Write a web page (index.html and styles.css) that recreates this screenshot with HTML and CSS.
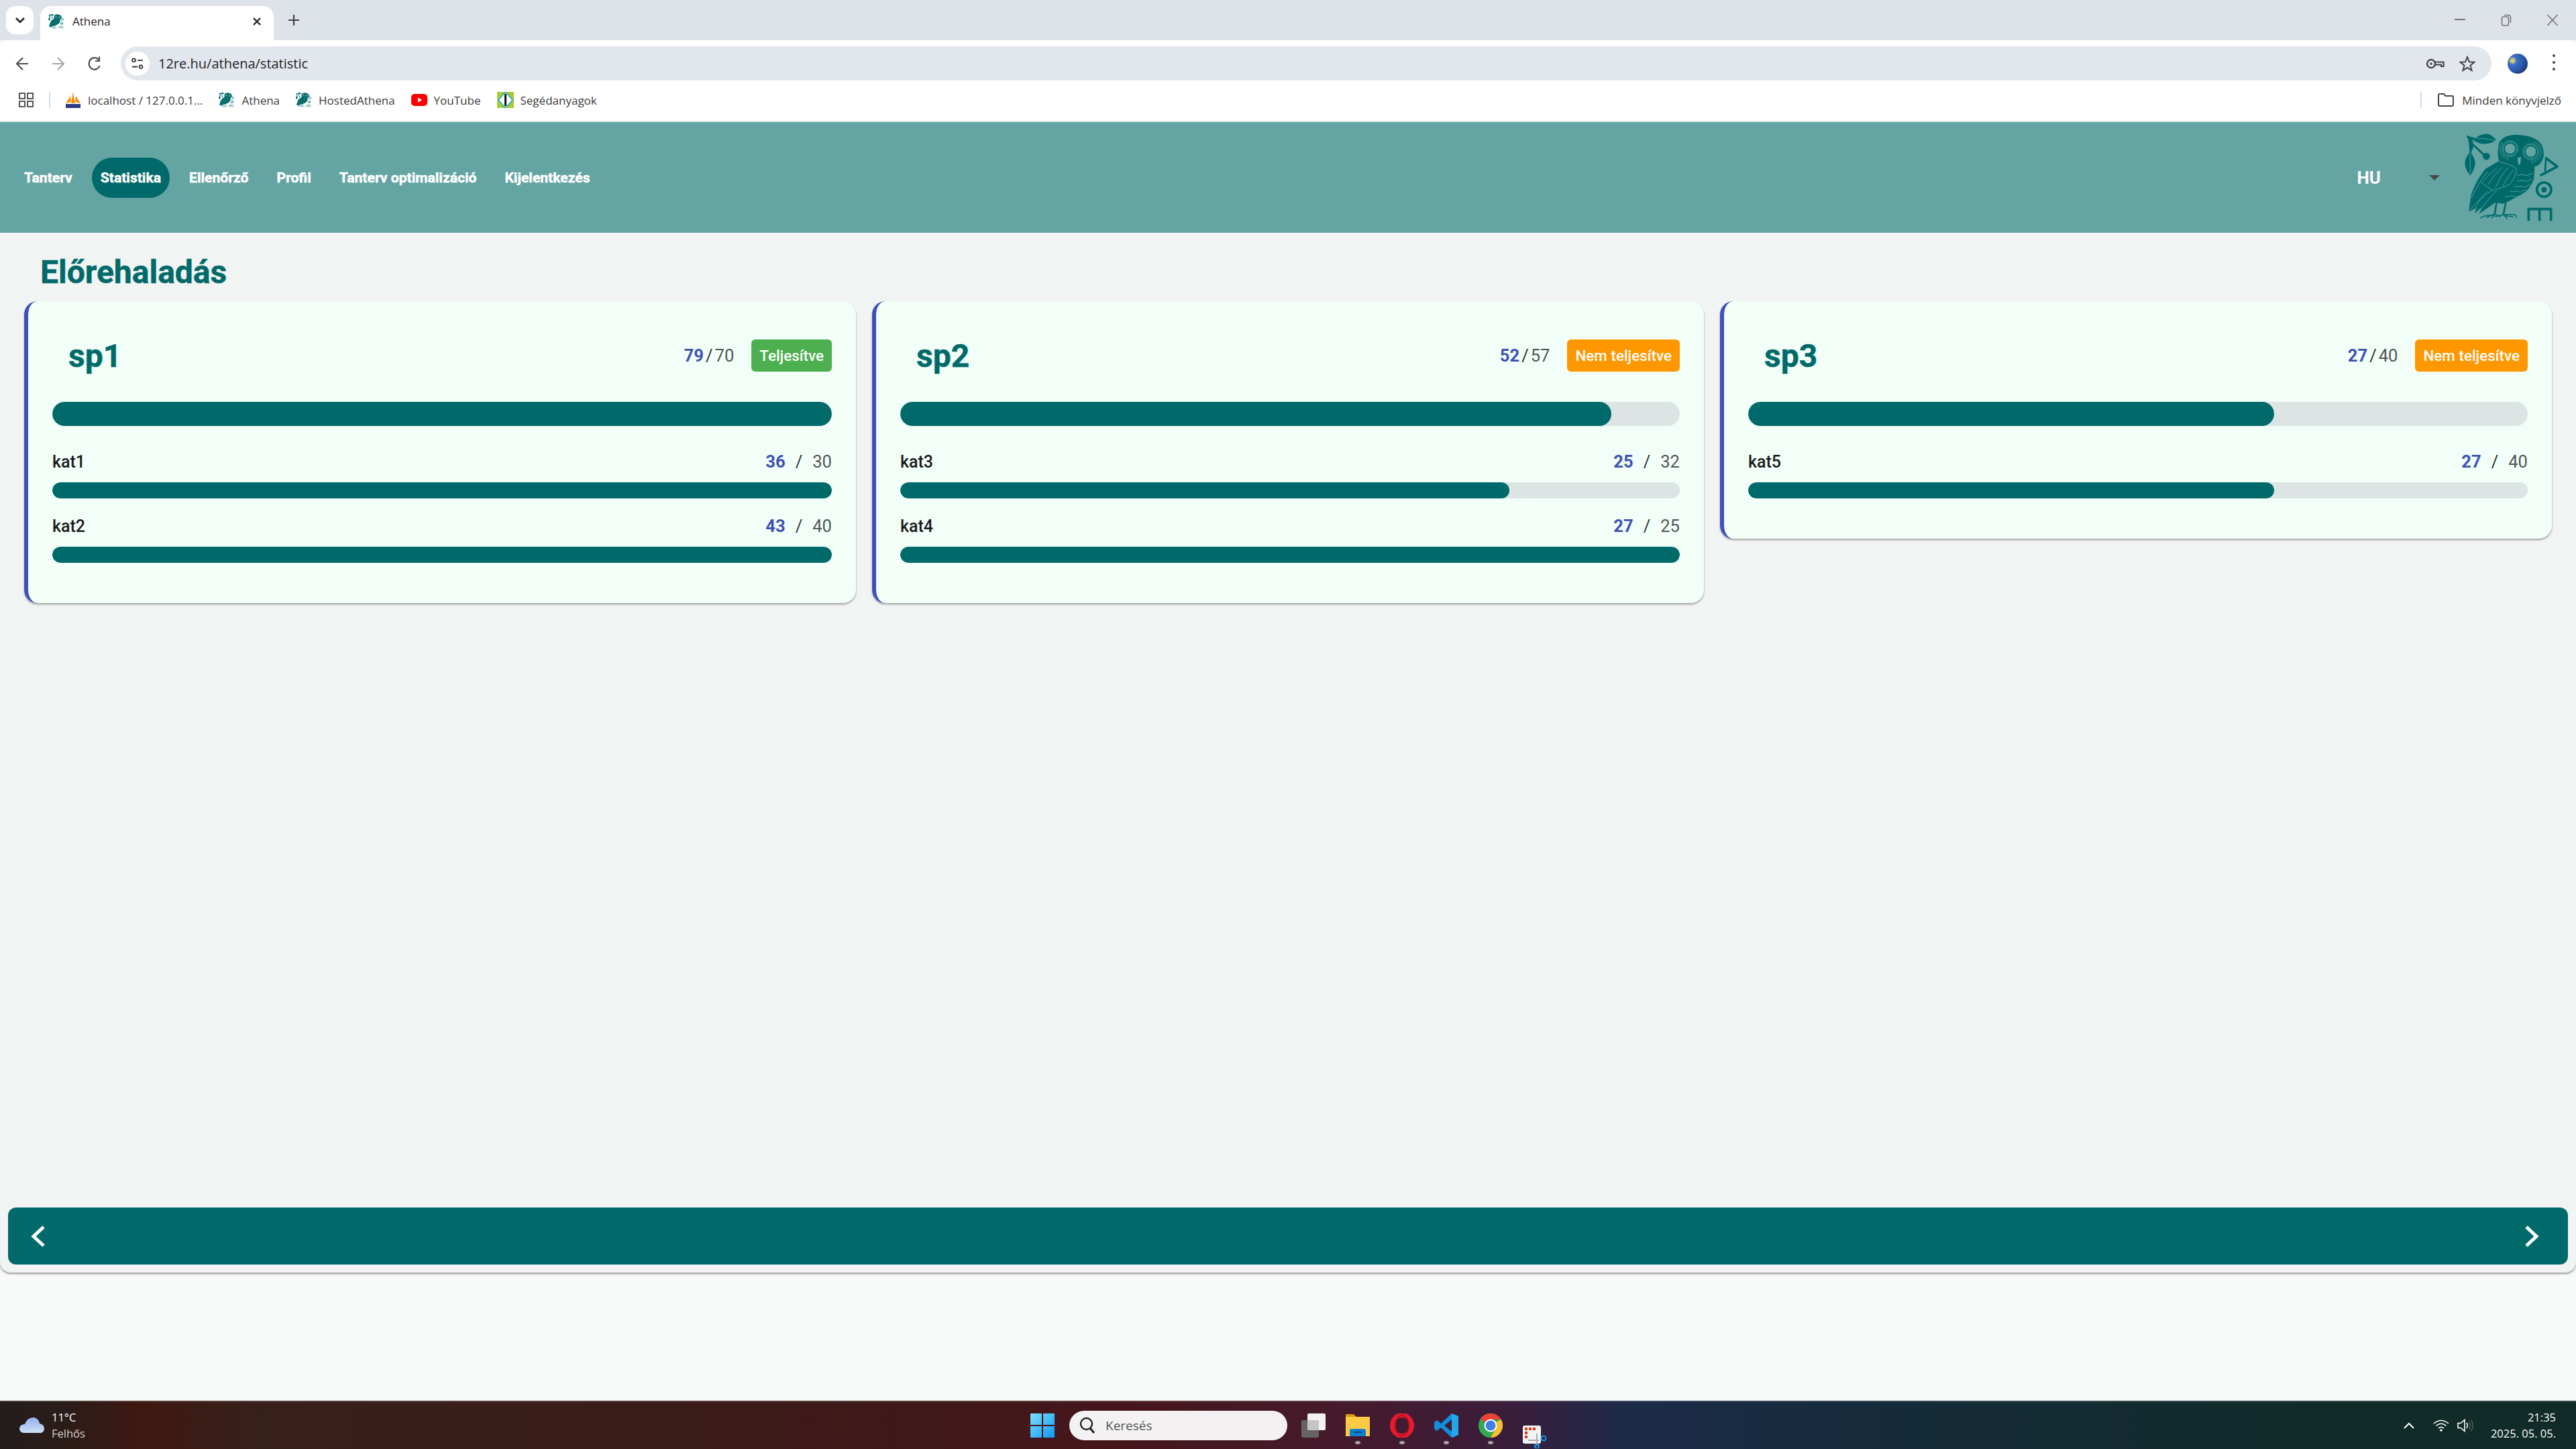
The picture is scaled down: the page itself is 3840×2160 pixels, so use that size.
FILE: index.html
```html
<!DOCTYPE html>
<html lang="hu">
<head>
<meta charset="utf-8">
<title>Athena</title>
<link rel="stylesheet" href="styles.css">
</head>
<body>
<svg class="defs" width="0" height="0" aria-hidden="true">
  <symbol id="owl" viewBox="0 0 600 480">
    <g fill="#006a6a">
      <path d="M108 50 L150 62 Q178 42 205 44 Q230 50 243 73 Q210 92 180 88 Q155 84 136 68 Q139 78 141 88 L192 134 L185 141 L142 100 L131 130 Q150 155 149 178 Q145 210 127 229 Q104 205 103 175 Q104 150 124 128 Q122 90 118 70 Z"/>
      <circle cx="199" cy="144" r="16"/>
      <path d="M252 105 Q252 70 290 55 Q320 42 360 50 Q420 55 445 90 Q458 115 455 145 Q445 185 415 190 L412 245 Q395 295 355 315 L300 345 L270 356 L240 350 L166 402 L178 372 L147 400 L154 375 L120 392 L130 320 Q150 255 195 200 L255 165 Q248 135 252 105 Z"/>
    </g>
    <g fill="none" stroke="#006a6a" stroke-linecap="round">
      <path stroke-width="8" d="M246 345 L236 402 M286 350 L276 402"/>
      <path stroke-width="4.500" d="M174 419 Q195 405 234 408 M200 417 L236 402 L262 414 M236 408 L222 420 M240 413 Q280 400 330 406 L334 418 M276 402 L292 424 M285 410 L318 414"/>
    </g>
    <g fill="#64a5a4">
      <circle cx="305" cy="110" r="23"/>
      <circle cx="398" cy="123" r="23"/>
      <path d="M339 151 L354 146 L352 172 L346 185 L340 170 Z"/>
    </g>
    <g fill="none" stroke="#64a5a4" stroke-width="2.500">
      <circle cx="305" cy="110" r="31"/>
      <circle cx="398" cy="123" r="31"/>
      <circle cx="305" cy="110" r="36" stroke-width="2"/>
      <circle cx="398" cy="123" r="36" stroke-width="2"/>
      <path d="M150 63 Q195 62 240 74 M127 135 L127 222"/>
      <path d="M254 168 Q300 178 332 196 Q338 228 305 268 Q262 290 226 296 M226 296 Q170 330 122 388"/>
      <path d="M246 196 Q210 225 178 262 L226 296 M270 192 Q236 222 206 270 M296 196 Q268 222 240 285 M320 205 Q298 232 272 278 M205 212 Q165 262 132 330"/>
      <path d="M205 300 Q160 335 146 396 M245 298 Q195 345 166 398"/>
      <path d="M336 226 q10 5 18 1 t18 1 t18 -2 t18 -3 M336 252 q10 5 18 1 t18 1 t18 -2 t16 -5 M324 278 q10 5 18 1 t18 1 t18 -2 t18 -5 M306 300 q10 5 18 1 t18 1 t18 -2 t16 -4 M282 322 q10 5 18 1 t18 0 t18 -3"/>
    </g>
    <g fill="none" stroke="#64a5a4" stroke-width="10" stroke-dasharray="2.500 7">
      <path d="M297 154 A45 45 0 0 1 268 84"/>
      <path d="M412 80 A45 45 0 0 1 400 168"/>
    </g>
    <g fill="none" stroke="#006a6a" stroke-width="11" stroke-linecap="round" stroke-linejoin="round">
      <path d="M466 152 L516 190 L444 228"/>
      <path d="M466 152 L462 208" stroke-width="8"/>
      <circle cx="457" cy="293" r="32"/>
      <path d="M388 428 L388 380 L488 380 L488 428 M437 380 L437 428"/>
    </g>
    <circle cx="457" cy="293" r="12" fill="#006a6a"/>
  </symbol>
</svg>

<header class="tabstrip">
  <div class="tab-list-btn">
    <svg width="16" height="10" viewBox="0 0 16 10"><path d="M2 2 L8 8 L14 2" fill="none" stroke="#222" stroke-width="2.6"/></svg>
  </div>
  <div class="tab">
    <svg class="favicon" width="24" height="24" viewBox="100 40 430 400"><use href="#owl" width="600" height="480"/></svg>
    <span class="tab-title">Athena</span>
    <svg class="tab-close" width="14" height="14" viewBox="0 0 14 14"><path d="M2 2 L12 12 M12 2 L2 12" stroke="#222" stroke-width="2.4"/></svg>
  </div>
  <svg class="tab-new" width="18" height="18" viewBox="0 0 18 18"><path d="M9 1 V17 M1 9 H17" stroke="#444" stroke-width="2.2"/></svg>
  <div class="win-controls">
    <svg width="16" height="16" viewBox="0 0 16 16"><path d="M0 8 H16" stroke="#777" stroke-width="2"/></svg>
    <svg width="16" height="18" viewBox="0 0 16 18"><rect x="1.5" y="4" width="10" height="13" rx="2.5" fill="none" stroke="#777" stroke-width="1.6"/><path d="M5 1.5 H11 Q14.500 1.500 14.500 5 V13" fill="none" stroke="#777" stroke-width="1.6"/></svg>
    <svg width="16" height="18" viewBox="0 0 16 18"><path d="M0.500 1 L15.500 17 M15.500 1 L0.500 17" stroke="#777" stroke-width="1.6"/></svg>
  </div>
</header>

<nav class="toolbar">
  <div class="toolbar-nav">
    <svg width="20" height="24" viewBox="0 0 20 24"><path d="M19 12 H3 M11 3 L2 12 L11 21" fill="none" stroke="#4a4d51" stroke-width="2.2"/></svg>
    <svg width="20" height="24" viewBox="0 0 20 24"><path d="M1 12 H17 M9 3 L18 12 L9 21" fill="none" stroke="#a4a7ab" stroke-width="2.2"/></svg>
    <svg width="20" height="24" viewBox="0 0 20 24"><path d="M17.500 15 A8.200 8.800 0 1 1 16 6 M17 1.500 V8 H11" fill="none" stroke="#4a4d51" stroke-width="2.2"/></svg>
  </div>
  <div class="omnibox">
    <div class="site-info">
      <svg width="18" height="18" viewBox="0 0 18 18"><circle cx="3.500" cy="3.800" r="2.400" fill="none" stroke="#333" stroke-width="1.800"/><path d="M9 3.800 H17 M1 13.500 H9" stroke="#333" stroke-width="1.800"/><circle cx="14" cy="13.500" r="2.400" fill="none" stroke="#333" stroke-width="1.800"/></svg>
    </div>
    <span class="url">12re.hu/athena/statistic</span>
    <svg class="key" width="28" height="18" viewBox="0 0 28 18"><circle cx="8" cy="9" r="6" fill="none" stroke="#444" stroke-width="2.400"/><circle cx="8" cy="9" r="1.800" fill="#444"/><path d="M14 6.500 H26.500 V13 H23 V10.500 H14" fill="none" stroke="#444" stroke-width="2.200"/></svg>
    <svg class="star" width="24" height="24" viewBox="0 0 24 24"><path d="M12 2 L14.800 9.200 L22.500 9.600 L16.500 14.500 L18.500 22 L12 17.800 L5.500 22 L7.500 14.500 L1.500 9.600 L9.200 9.200 Z" fill="none" stroke="#444" stroke-width="2"/></svg>
  </div>
  <div class="avatar"></div>
  <div class="menu-dots"><i></i><i></i><i></i></div>
</nav>

<div class="bookmarks">
  <svg class="bm-apps" width="22" height="22" viewBox="0 0 22 22"><g fill="none" stroke="#555" stroke-width="2"><rect x="1" y="1" width="8" height="8"/><rect x="13" y="1" width="8" height="8"/><rect x="1" y="13" width="8" height="8"/><rect x="13" y="13" width="8" height="8"/></g></svg>
  <span class="bm-sep"></span>
  <div class="bm bm-first">
    <svg width="24" height="24" viewBox="0 0 24 24"><path d="M1 17 L8 6 L9 15 Z M9 17 L12 0 L15 17 Z M15 15 L16 6 L23 17 Z" fill="#f29111"/><rect x="1" y="18" width="22" height="6" fill="#2b3a86"/></svg>
    <span>localhost / 127.0.0.1...</span>
  </div>
  <div class="bm"><svg width="24" height="24" viewBox="100 40 430 400"><use href="#owl" width="600" height="480"/></svg><span>Athena</span></div>
  <div class="bm"><svg width="24" height="24" viewBox="100 40 430 400"><use href="#owl" width="600" height="480"/></svg><span>HostedAthena</span></div>
  <div class="bm">
    <svg width="24" height="24" viewBox="0 0 24 24"><rect x="0" y="3" width="24" height="18" rx="5" fill="#f00"/><path d="M10 8.500 L16 12 L10 15.500 Z" fill="#fff"/></svg>
    <span>YouTube</span>
  </div>
  <div class="bm">
    <svg width="25" height="24" viewBox="0 0 25 24"><rect width="25" height="24" fill="#a9cb2f"/><path d="M12.500 0 L23 12 L12.500 24 L2 12 Z" fill="#fff" stroke="#18a9d8" stroke-width="1.500"/><path d="M12.500 3 V21" stroke="#111" stroke-width="3"/></svg>
    <span>Segédanyagok</span>
  </div>
  <span class="bm-sep bm-sep-end"></span>
  <div class="bm bm-all">
    <svg width="24" height="20" viewBox="0 0 24 20"><path d="M1 3 Q1 1 3 1 H9 L11.500 4 H21 Q23 4 23 6 V17 Q23 19 21 19 H3 Q1 19 1 17 Z" fill="none" stroke="#444" stroke-width="2"/></svg>
    <span>Minden könyvjelző</span>
  </div>
</div>

<main class="shell">
  <header class="app-header">
    <ul class="app-nav">
      <li class="nav-item">Tanterv</li>
      <li class="nav-item nav-active">Statistika</li>
      <li class="nav-item">Ellenőrző</li>
      <li class="nav-item">Profil</li>
      <li class="nav-item">Tanterv optimalizáció</li>
      <li class="nav-item">Kijelentkezés</li>
    </ul>
    <div class="lang"><span>HU</span><i class="caret"></i></div>
    <svg class="logo" width="200" height="160"><use href="#owl"/></svg>
  </header>

  <section class="content">
    <h1 class="page-title">Előrehaladás</h1>
    <div class="cards">
      <article class="card">
        <div class="card-head">
          <h2 class="card-title">sp1</h2>
          <div class="card-score"><b>79</b><span class="slash">/</span><span class="max">70</span></div>
          <span class="badge badge-ok">Teljesítve</span>
        </div>
        <div class="bar bar-big"><div class="fill" style="width:100%"></div></div>
        <div class="cat">
          <div class="cat-row"><span class="cat-name">kat1</span><div class="cat-score"><b>36</b><span class="slash">/</span><span class="max">30</span></div></div>
          <div class="bar"><div class="fill" style="width:100%"></div></div>
        </div>
        <div class="cat">
          <div class="cat-row"><span class="cat-name">kat2</span><div class="cat-score"><b>43</b><span class="slash">/</span><span class="max">40</span></div></div>
          <div class="bar"><div class="fill" style="width:100%"></div></div>
        </div>
      </article>

      <article class="card">
        <div class="card-head">
          <h2 class="card-title">sp2</h2>
          <div class="card-score"><b>52</b><span class="slash">/</span><span class="max">57</span></div>
          <span class="badge badge-no">Nem teljesítve</span>
        </div>
        <div class="bar bar-big"><div class="fill" style="width:91.2%"></div></div>
        <div class="cat">
          <div class="cat-row"><span class="cat-name">kat3</span><div class="cat-score"><b>25</b><span class="slash">/</span><span class="max">32</span></div></div>
          <div class="bar"><div class="fill" style="width:78.1%"></div></div>
        </div>
        <div class="cat">
          <div class="cat-row"><span class="cat-name">kat4</span><div class="cat-score"><b>27</b><span class="slash">/</span><span class="max">25</span></div></div>
          <div class="bar"><div class="fill" style="width:100%"></div></div>
        </div>
      </article>

      <article class="card">
        <div class="card-head">
          <h2 class="card-title">sp3</h2>
          <div class="card-score"><b>27</b><span class="slash">/</span><span class="max">40</span></div>
          <span class="badge badge-no">Nem teljesítve</span>
        </div>
        <div class="bar bar-big"><div class="fill" style="width:67.5%"></div></div>
        <div class="cat">
          <div class="cat-row"><span class="cat-name">kat5</span><div class="cat-score"><b>27</b><span class="slash">/</span><span class="max">40</span></div></div>
          <div class="bar"><div class="fill" style="width:67.5%"></div></div>
        </div>
      </article>
    </div>
  </section>

  <div class="pager">
    <svg width="22" height="34" viewBox="0 0 22 34"><path d="M19 3 L4 17 L19 31" fill="none" stroke="#fff" stroke-width="5"/></svg>
    <svg width="22" height="34" viewBox="0 0 22 34"><path d="M3 3 L18 17 L3 31" fill="none" stroke="#fff" stroke-width="5"/></svg>
  </div>
</main>

<footer class="taskbar">
  <div class="weather">
    <svg width="38" height="26" viewBox="0 0 38 26"><defs><linearGradient id="cl" x1="0" y1="0" x2="0" y2="1"><stop offset="0" stop-color="#8fb0ea"/><stop offset="1" stop-color="#cfe0f7"/></linearGradient></defs><path d="M7 24 Q0 24 0 17 Q1 11 8 11 Q12 0 22 1 Q29 3 30 10 Q37 11 37 18 Q36 24 31 24 Z" fill="url(#cl)"/></svg>
    <div class="weather-text"><span>11°C</span><span class="weather-sub">Felhős</span></div>
  </div>
  <div class="task-center">
    <svg class="ti-win" width="36" height="36" viewBox="0 0 36 36"><defs><linearGradient id="wn" x1="0" y1="0" x2="1" y2="1"><stop offset="0" stop-color="#7ae3fb"/><stop offset="1" stop-color="#0f96f5"/></linearGradient></defs><path d="M1 0 H17 V17 H0 V1 Q0 0 1 0 Z M19 0 H35 Q36 0 36 1 V17 H19 Z M0 19 H17 V36 H1 Q0 36 0 35 Z M19 19 H36 V35 Q36 36 35 36 H19 Z" fill="url(#wn)"/></svg>
    <div class="search">
      <svg width="24" height="26" viewBox="0 0 24 26"><circle cx="10.500" cy="10.500" r="8.500" fill="none" stroke="#222" stroke-width="2.400"/><path d="M16 17 L22 24" stroke="#222" stroke-width="3"/></svg>
      <span>Keresés</span>
    </div>
    <div class="task-icons">
      <div class="ti">
        <svg width="36" height="36" viewBox="0 0 36 36"><rect x="9" y="0" width="27" height="25" rx="2" fill="#f2f2f2"/><rect x="0" y="10" width="26" height="26" rx="2" fill="#6a6a6a" opacity=".9"/><rect x="9" y="10" width="17" height="15" fill="#c4c4c4"/></svg>
      </div>
      <div class="ti ti-open">
        <svg width="36" height="36" viewBox="0 0 36 36"><path d="M0 1 H12 L16 5 H36 V34 H0 Z" fill="#d59a0e"/><rect x="0" y="5" width="36" height="29" rx="1" fill="#fdca46"/><path d="M6 34 V26 Q6 23 9 23 H27 Q30 23 30 26 V34 Z" fill="#0d7fd1"/><rect x="12" y="27" width="12" height="2" fill="#084a80"/></svg>
      </div>
      <div class="ti ti-open">
        <svg width="36" height="36" viewBox="0 0 36 36"><ellipse cx="18" cy="18" rx="14.500" ry="15.500" fill="none" stroke="#e81a2d" stroke-width="7"/><ellipse cx="18" cy="18" rx="10" ry="15" fill="none" stroke="#a90f20" stroke-width="1.500"/></svg>
      </div>
      <div class="ti ti-open">
        <svg width="36" height="36" viewBox="0 0 36 36"><path d="M26 0 L36 4 V32 L26 36 L10 21 L4 26 L0 23 V13 L4 10 L10 15 Z M26 9 L15 18 L26 27 Z" fill="#0f8fdc"/><path d="M26 0 L36 4 V32 L26 36 Z" fill="#24a6ee"/></svg>
      </div>
      <div class="ti ti-open">
        <svg width="36" height="36" viewBox="0 0 36 36"><circle cx="18" cy="18" r="18" fill="#34a853"/><path d="M18 0 A18 18 0 0 1 33.600 9 L18 9 A9 9 0 0 0 10 13.500 L3 8 A18 18 0 0 1 18 0 Z" fill="#ea4335"/><path d="M33.600 9 A18 18 0 0 1 18 36 L26 22 A9 9 0 0 0 26 13 Z" fill="#fbc02d"/><circle cx="18" cy="18" r="9.500" fill="#fff"/><circle cx="18" cy="18" r="7.500" fill="#3f80ea"/></svg>
      </div>
      <div class="ti ti-snip">
        <svg width="36" height="34" viewBox="0 0 36 34"><rect x="0" y="0" width="27" height="27" rx="3" fill="#f3f3f3"/><path d="M3 3 H7 V7 H3 Z M9 3 H13 V7 H9 Z M15 3 H19 V7 H15 Z M3 9 H7 V13 H3 Z M3 15 H7 V19 H3 Z" fill="#d63b1f"/><path d="M8 22 H24 M21 12 V30" stroke="#aaa" stroke-width="2"/><circle cx="31" cy="19" r="3.500" fill="none" stroke="#1493e0" stroke-width="2.200"/><circle cx="21" cy="31" r="3" fill="none" stroke="#1493e0" stroke-width="2.200"/></svg>
      </div>
    </div>
  </div>
  <div class="tray">
    <svg width="16" height="10" viewBox="0 0 16 10"><path d="M1 9 L8 2 L15 9" fill="none" stroke="#fff" stroke-width="2"/></svg>
    <svg class="tray-wifi" width="24" height="18" viewBox="0 0 24 18"><g fill="none" stroke="#fff" stroke-width="1.600"><path d="M1 6 Q12 -3 23 6"/><path d="M4.500 9.500 Q12 3 19.500 9.500"/><path d="M8 13 Q12 9.500 16 13"/></g><circle cx="12" cy="16" r="1.800" fill="#fff"/></svg>
    <svg width="24" height="20" viewBox="0 0 24 20"><path d="M1 6.500 H5 L11 1.500 V18.500 L5 13.500 H1 Z" fill="none" stroke="#fff" stroke-width="1.600"/><path d="M14 6 Q16.500 10 14 14" fill="none" stroke="#fff" stroke-width="1.500"/><path d="M17.500 3.500 Q21 10 17.500 16.500 M21 1.500 Q25 10 21 18.500" fill="none" stroke="#5a6664" stroke-width="1.300"/></svg>
    <div class="clock"><span>21:35</span><span>2025. 05. 05.</span></div>
  </div>
</footer>
</body>
</html>
```

FILE: styles.css
```css
* { box-sizing: border-box; }
html, body { margin: 0; padding: 0; }
body {
  width: 3840px;
  height: 2160px;
  overflow: hidden;
  display: flex;
  flex-direction: column;
  background: #f8faf9;
  font-family: Roboto, "Liberation Sans", sans-serif;
}
.defs { position: absolute; }

/* browser chrome */
.tabstrip {
  flex: none;
  height: 60px;
  background: #dee3ea;
  display: flex;
  align-items: flex-start;
  padding: 9px 27px 0 9px;
}
.tab-list-btn {
  width: 41px;
  height: 42px;
  background: #fff;
  border-radius: 14px;
  display: flex;
  align-items: center;
  justify-content: center;
}
.tab {
  width: 348px;
  height: 51px;
  margin-left: 10px;
  background: #fff;
  border-radius: 16px 16px 0 0;
  display: flex;
  align-items: center;
  padding: 0 18px 6px 12px;
}
.favicon { flex: none; }
.tab-title {
  margin-left: 12px;
  font: 400 17px "Open Sans", sans-serif;
  color: #222;
}
.tab-close { margin-left: auto; }
.tab-new { margin: 12px 0 0 21px; }
.win-controls {
  margin-left: auto;
  display: flex;
  gap: 53px;
  padding-top: 12px;
}
.toolbar {
  flex: none;
  height: 60px;
  background: #fff;
  border-radius: 14px 14px 0 0;
  display: flex;
  align-items: flex-end;
  padding-left: 23px;
  padding-right: 31px;
  margin-top: 0;
}
.toolbar-nav {
  height: 51px;
  display: flex;
  align-items: center;
  gap: 34px;
}
.omnibox {
  width: 3534px;
  height: 51px;
  margin-left: 29px;
  background: #e2e7ee;
  border-radius: 26px;
  display: flex;
  align-items: center;
  padding-left: 7px;
}
.site-info {
  width: 36px;
  height: 36px;
  background: #fff;
  border-radius: 50%;
  display: flex;
  align-items: center;
  justify-content: center;
}
.url {
  margin-left: 13px;
  font: 400 20px "Open Sans", sans-serif;
  color: #1f1f1f;
}
.key { margin-left: auto; }
.star { margin: 0 24px 0 22px; }
.avatar {
  width: 30px;
  height: 30px;
  margin: 0 0 10px 24px;
  border-radius: 50%;
  background: radial-gradient(circle at 25% 35%, #d6cf6a 0 8%, #3b6fc9 20%, #2a56a8 55%, #16233f 100%);
}
.menu-dots {
  margin: 0 0 15px auto;
  display: flex;
  flex-direction: column;
  gap: 6px;
}
.menu-dots i {
  width: 4px;
  height: 4px;
  border-radius: 50%;
  background: #444;
}
.bookmarks {
  flex: none;
  height: 62px;
  padding: 0 22px 2px 28px;
  background: #fff;
  border-bottom: 2px solid #e5e8e8;
  display: flex;
  align-items: center;
}
.bm-sep {
  width: 2px;
  height: 24px;
  margin-left: 23px;
  background: #cfdcf2;
}
.bm {
  display: flex;
  align-items: center;
  gap: 10px;
  margin-left: 24px;
  font: 400 17px "Open Sans", sans-serif;
  color: #3c3c3c;
  white-space: nowrap;
}
.bm-first { margin-left: 22px; }
.bm-sep-end { margin-left: auto; }
.bm-all { margin-left: 24px; gap: 12px; }

/* application */
.shell {
  flex: none;
  height: 1715px;
  background: #f2f4f4;
  border-radius: 0 0 16px 16px;
  box-shadow: 0 2px 3px rgba(0, 0, 0, .4);
  display: flex;
  flex-direction: column;
}
.app-header {
  flex: none;
  height: 165px;
  background: #64a5a4;
  display: flex;
  align-items: center;
  padding-left: 23px;
}
.app-nav {
  list-style: none;
  margin: 0;
  padding: 0;
  display: flex;
  gap: 16px;
}
.nav-item {
  height: 60px;
  line-height: 60px;
  padding: 0 13px;
  border-radius: 30px;
  color: #fff;
  font-size: 21.1px;
  font-weight: 700;
  -webkit-text-stroke: .5px #fff;
  white-space: nowrap;
}
.nav-active { background: #006a6a; }
.lang {
  margin-left: auto;
  display: flex;
  align-items: center;
  color: #fff;
  font-size: 26px;
  font-weight: 700;
}
.caret {
  width: 0;
  height: 0;
  margin: 0 3px 0 72px;
  border: 8px solid transparent;
  border-top-color: #4a4a4a;
  border-bottom-width: 0;
}
.logo { flex: none; }
.content {
  flex: 1;
  min-height: 0;
  padding: 0 36px;
}
.page-title {
  margin: 34px 0 19px 24px;
  height: 49px;
  line-height: 49px;
  font-size: 48px;
  font-weight: 700;
  -webkit-text-stroke: .5px #006a6a;
  color: #006a6a;
}
.cards {
  display: grid;
  grid-template-columns: repeat(3, 1fr);
  gap: 24px;
  align-items: start;
}
.card {
  padding: 57px 36px 60px 36px;
  background: #f2fff9;
  border-left: 6px solid #3f51b5;
  border-radius: 20px;
  box-shadow: 0 2px 3px rgba(0, 0, 0, .35);
}
.card-head {
  height: 48px;
  display: flex;
  align-items: center;
  margin-bottom: 45px;
}
.card-title {
  margin: 0 auto 0 24px;
  font-size: 48px;
  font-weight: 700;
  -webkit-text-stroke: .5px #006a6a;
  color: #006a6a;
}
.card-score {
  display: flex;
  align-items: center;
  gap: 3px;
  margin-right: 26px;
  font-size: 25.6px;
  color: #555;
}
.card-score b, .cat-score b { color: #3f51b5; font-weight: 700; }
.slash { color: #333; }
.badge {
  height: 48px;
  line-height: 48px;
  padding: 0 12px;
  border-radius: 6px;
  color: #fff;
  font-size: 22.4px;
  font-weight: 500;
  white-space: nowrap;
}
.badge-ok { background: #4caf50; }
.badge-no { background: #ff9800; }
.bar {
  height: 24px;
  background: #dce5e3;
  border-radius: 12px;
  overflow: hidden;
}
.bar-big { height: 36px; border-radius: 18px; }
.fill {
  height: 100%;
  background: #006a6a;
  border-radius: inherit;
}
.cat { margin-top: 27px; }
.bar-big + .cat { margin-top: 39px; }
.cat-row {
  height: 28px;
  margin-bottom: 17px;
  display: flex;
  justify-content: space-between;
  align-items: center;
  font-size: 25.6px;
}
.cat-name { color: #1a1a1a; font-weight: 500; font-size: 25px; }
.cat-score {
  display: flex;
  gap: 15px;
  color: #555;
}
.pager {
  flex: none;
  height: 85px;
  margin: 0 12px 12px;
  padding: 0 43px 0 34px;
  background: #006a6a;
  border-radius: 12px;
  display: flex;
  align-items: center;
  justify-content: space-between;
}

/* taskbar */
.taskbar {
  flex: none;
  height: 72px;
  margin-top: auto;
  position: relative;
  border-top: 2px solid rgba(255, 255, 255, .15);
  background: linear-gradient(90deg, #231d1b 0, #2a1c19 90px, #3e1811 210px, #38201a 380px, #3a1c18 1000px, #45161c 1700px, #451a2c 2000px, #3a1d3b 2250px, #1c2a48 2420px, #152b3a 2800px, #112b28 3500px, #112b28 100%);
  display: flex;
  align-items: center;
  padding: 0 30px 0 29px;
  font-family: "Open Sans", sans-serif;
  color: #fff;
}
.weather {
  display: flex;
  align-items: center;
  gap: 10px;
  width: 1507px;
}
.weather-text {
  display: flex;
  flex-direction: column;
  font-size: 16.5px;
  line-height: 24px;
}
.weather-sub { color: #d4d0cd; }
.task-center {
  display: flex;
  align-items: center;
}
.search {
  width: 325px;
  height: 44px;
  margin-left: 22px;
  padding-left: 15px;
  border-radius: 22px;
  background: #f3f1f1;
  display: flex;
  align-items: center;
  gap: 15px;
  color: #555;
  font-size: 19px;
}
.task-icons {
  display: flex;
  gap: 30px;
  margin-left: 21px;
}
.ti {
  position: relative;
  width: 36px;
  height: 36px;
}
.ti-open::after {
  content: "";
  position: absolute;
  left: 14px;
  top: 41px;
  width: 8px;
  height: 5px;
  border-radius: 50%;
  background: #a9a3a6;
}
.ti-snip { top: 18px; }
.tray {
  margin-left: auto;
  display: flex;
  align-items: center;
  font-size: 16.5px;
}
.tray-wifi { margin: 0 12px 0 28px; }
.clock {
  display: flex;
  flex-direction: column;
  align-items: flex-end;
  margin-left: 26px;
  line-height: 24px;
}
```
